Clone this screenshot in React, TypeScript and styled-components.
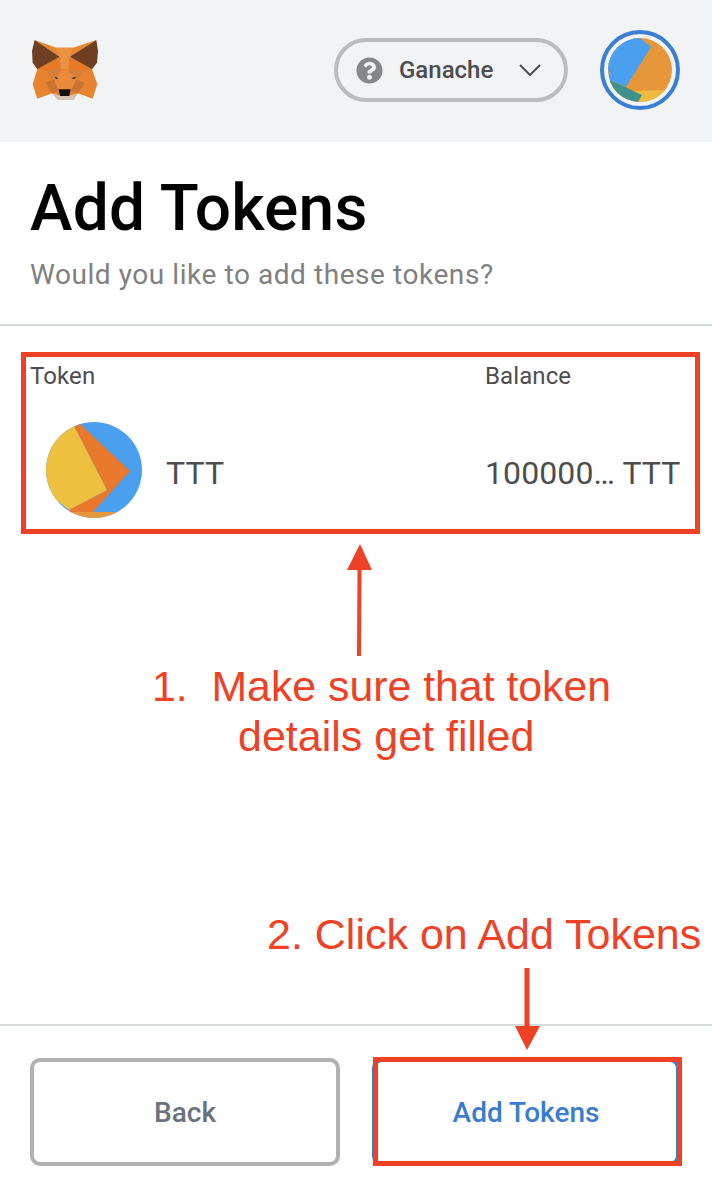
import React from 'react';
import styled, { createGlobalStyle } from 'styled-components';
import { FaQuestionCircle } from 'react-icons/fa';

const RED = '#ee4125';

const GlobalStyle = createGlobalStyle`
  html, body {
    margin: 0;
    padding: 0;
    background: #fff;
    font-family: Roboto, "Liberation Sans", sans-serif;
  }
`;

const Page = styled.div`
  position: relative;
  display: flex;
  flex-direction: column;
  width: 712px;
  height: 1196px;
  overflow: hidden;
`;

const Header = styled.header`
  display: flex;
  align-items: center;
  justify-content: space-between;
  box-sizing: border-box;
  height: 142px;
  padding: 0 32px 2px 28px;
  background: #f2f3f4;
`;

const HeaderRight = styled.div`
  display: flex;
  align-items: center;
  gap: 32px;
`;

const NetworkPill = styled.div`
  display: flex;
  align-items: center;
  box-sizing: border-box;
  width: 234px;
  height: 64px;
  padding-left: 18px;
  border: 4px solid #bbbcc0;
  border-radius: 32px;
  color: #85878a;
`;

const NetworkName = styled.span`
  margin-left: 16px;
  margin-right: 26px;
  font-size: 24px;
  font-weight: 500;
  color: #4d4d4f;
`;

const AccountRing = styled.div`
  display: flex;
  align-items: center;
  justify-content: center;
  box-sizing: border-box;
  width: 80px;
  height: 80px;
  border: 4px solid #3a7fd5;
  border-radius: 50%;
`;

const TitleBlock = styled.section`
  box-sizing: border-box;
  height: 184px;
  padding: 29px 30px 0;
  border-bottom: 2px solid #d6d9dc;
`;

const Title = styled.h1`
  margin: 0;
  font-size: 64px;
  line-height: 75px;
  font-weight: 500;
  letter-spacing: 0.2px;
  color: #000;
`;

const Subtitle = styled.p`
  margin: 12px 0 0;
  font-size: 28px;
  line-height: 33px;
  letter-spacing: 0.56px;
  color: #808080;
`;

const TokenTable = styled.section`
  display: grid;
  grid-template-columns: 455px 1fr;
  padding: 36px 32px 0 30px;
`;

const ColumnLabel = styled.div`
  font-size: 24px;
  line-height: 28px;
  letter-spacing: 0.1px;
  color: #4d4d4f;
`;

const TokenCell = styled.div`
  display: flex;
  align-items: center;
  gap: 24px;
  margin-top: 32px;
  padding-left: 16px;
  height: 96px;
`;

const TokenText = styled.span`
  margin-top: 6px;
  font-size: 32px;
  letter-spacing: 0.1px;
  white-space: nowrap;
  color: #4d4d4f;
`;

const BalanceCell = styled(TokenCell)`
  padding-left: 0;
`;

const Spacer = styled.div`
  flex: 1;
`;

const Footer = styled.footer`
  display: flex;
  justify-content: space-between;
  box-sizing: border-box;
  height: 172px;
  padding: 32px 32px 0 30px;
  border-top: 2px solid #d6d9dc;
`;

const FooterButton = styled.button<{ $primary?: boolean }>`
  box-sizing: border-box;
  width: ${(props) => (props.$primary ? '308px' : '310px')};
  height: 108px;
  border: 4px solid ${(props) => (props.$primary ? '#3a7cd0' : '#b1b1b1')};
  border-radius: 10px;
  background: #fff;
  font-family: inherit;
  font-size: 28px;
  font-weight: 500;
  color: ${(props) => (props.$primary ? '#3a7cd0' : '#6a737d')};
`;

const TokenHighlight = styled.div`
  position: absolute;
  left: 21px;
  top: 352px;
  box-sizing: border-box;
  width: 679px;
  height: 182px;
  border: 5px solid ${RED};
`;

const ButtonHighlight = styled.div`
  position: absolute;
  left: 373px;
  top: 1057px;
  box-sizing: border-box;
  width: 309px;
  height: 109px;
  border: 5px solid ${RED};
`;

const StepNote = styled.div<{ $top: number; $left: number; $size?: number }>`
  position: absolute;
  top: ${(props) => props.$top}px;
  left: ${(props) => props.$left}px;
  font-family: "Liberation Sans", Arial, sans-serif;
  font-size: ${(props) => props.$size ?? 42.8}px;
  line-height: 50px;
  white-space: pre;
  color: ${RED};
`;

const ArrowSvg = styled.svg<{ $top: number; $left: number }>`
  position: absolute;
  top: ${(props) => props.$top}px;
  left: ${(props) => props.$left}px;
`;

const FoxLogo = () => (
  <svg width="74" height="68" viewBox="0 0 222 204">
    <polygon points="28,100 14,145 28,188 72,172 90,192 135,192 150,172 194,188 208,145 192,100 125,62 95,62" fill="#e8842f" />
    <polygon points="20,12 85,35 135,35 205,12 125,62 95,62" fill="#e8872f" />
    <polygon points="85,35 135,35 125,62 122,98 98,98 95,62" fill="#ea9240" />
    <polygon points="28,100 95,62 98,98 58,105" fill="#e67a25" />
    <polygon points="192,100 125,62 122,98 165,105" fill="#e67a25" />
    <polygon points="78,130 98,105 122,105 145,130 128,165 92,165" fill="#e98b3a" />
    <polygon points="58,105 98,96 98,108 78,130 60,118" fill="#d77f38" />
    <polygon points="165,105 122,96 122,108 145,130 162,118" fill="#d77f38" />
    <polygon points="52,140 78,130 92,165 72,172" fill="#cb7434" />
    <polygon points="172,140 145,130 128,165 150,172" fill="#cb7434" />
    <polygon points="20,12 95,62 28,100 14,80 12,45" fill="#6e3f20" />
    <polygon points="205,12 125,62 192,100 207,80 210,45" fill="#6e3f20" />
    <polygon points="78,122 92,126 85,130" fill="#233447" />
    <polygon points="145,122 130,126 138,130" fill="#233447" />
    <polygon points="72,172 92,178 128,178 150,172 135,192 90,192" fill="#d8c4b4" />
    <polygon points="92,160 128,160 124,180 96,180" fill="#111111" />
  </svg>
);

const AccountIcon = () => (
  <svg width="64" height="64" viewBox="0 0 64 64">
    <clipPath id="account-clip">
      <circle cx="32" cy="32" r="32" />
    </clipPath>
    <g clipPath="url(#account-clip)">
      <rect width="64" height="64" fill="#e7963a" />
      <polygon points="24,53 58,52 64,64 30,64 34,57" fill="#efbb3f" />
      <polygon points="2,42 34,57 30,64 0,64" fill="#3f928c" />
      <polygon points="32,0 43,9 18,49 2,42 0,30 0,0" fill="#4a9fef" />
    </g>
  </svg>
);

const TokenIcon = () => (
  <svg width="96" height="96" viewBox="0 0 96 96">
    <clipPath id="token-clip">
      <circle cx="48" cy="48" r="48" />
    </clipPath>
    <g clipPath="url(#token-clip)">
      <rect width="96" height="96" fill="#4a9fef" />
      <rect y="90" width="96" height="6" fill="#e5993a" />
      <polygon points="28,4 34,2 84,49 47,90 24,90 23,88 61,68" fill="#e9782d" />
      <polygon points="28,4 61,68 23,88 0,70 0,10" fill="#edc040" />
    </g>
  </svg>
);

const Chevron = () => (
  <svg width="22" height="12" viewBox="0 0 22 12">
    <path d="M1 1l10 10L21 1" fill="none" stroke="#4d4d4f" strokeWidth="2" />
  </svg>
);

const App: React.FC = () => (
  <Page>
    <GlobalStyle />
    <Header>
      <FoxLogo />
      <HeaderRight>
        <NetworkPill>
          <FaQuestionCircle size={27} />
          <NetworkName>Ganache</NetworkName>
          <Chevron />
        </NetworkPill>
        <AccountRing>
          <AccountIcon />
        </AccountRing>
      </HeaderRight>
    </Header>
    <TitleBlock>
      <Title>Add Tokens</Title>
      <Subtitle>Would you like to add these tokens?</Subtitle>
    </TitleBlock>
    <TokenTable>
      <ColumnLabel>Token</ColumnLabel>
      <ColumnLabel>Balance</ColumnLabel>
      <TokenCell>
        <TokenIcon />
        <TokenText>TTT</TokenText>
      </TokenCell>
      <BalanceCell>
        <TokenText>100000… TTT</TokenText>
      </BalanceCell>
    </TokenTable>
    <Spacer />
    <Footer>
      <FooterButton>Back</FooterButton>
      <FooterButton $primary>Add Tokens</FooterButton>
    </Footer>

    <TokenHighlight />
    <ButtonHighlight />
    <StepNote $top={661} $left={152}>1.  Make sure that token</StepNote>
    <StepNote $top={711} $left={238} $size={43}>details get filled</StepNote>
    <StepNote $top={909} $left={267} $size={43}>2. Click on Add Tokens</StepNote>
    <ArrowSvg $top={544} $left={346} width="28" height="114" viewBox="0 0 28 114">
      <polygon points="14,0 26,26 15.5,26 15,112 11,112 11.5,26 1,26" fill={RED} />
    </ArrowSvg>
    <ArrowSvg $top={968} $left={514} width="28" height="84" viewBox="0 0 28 84">
      <polygon points="10.5,0 15.5,0 15.5,58 26,58 13,82 1,58 10.5,58" fill={RED} />
    </ArrowSvg>
  </Page>
);

export default App;
